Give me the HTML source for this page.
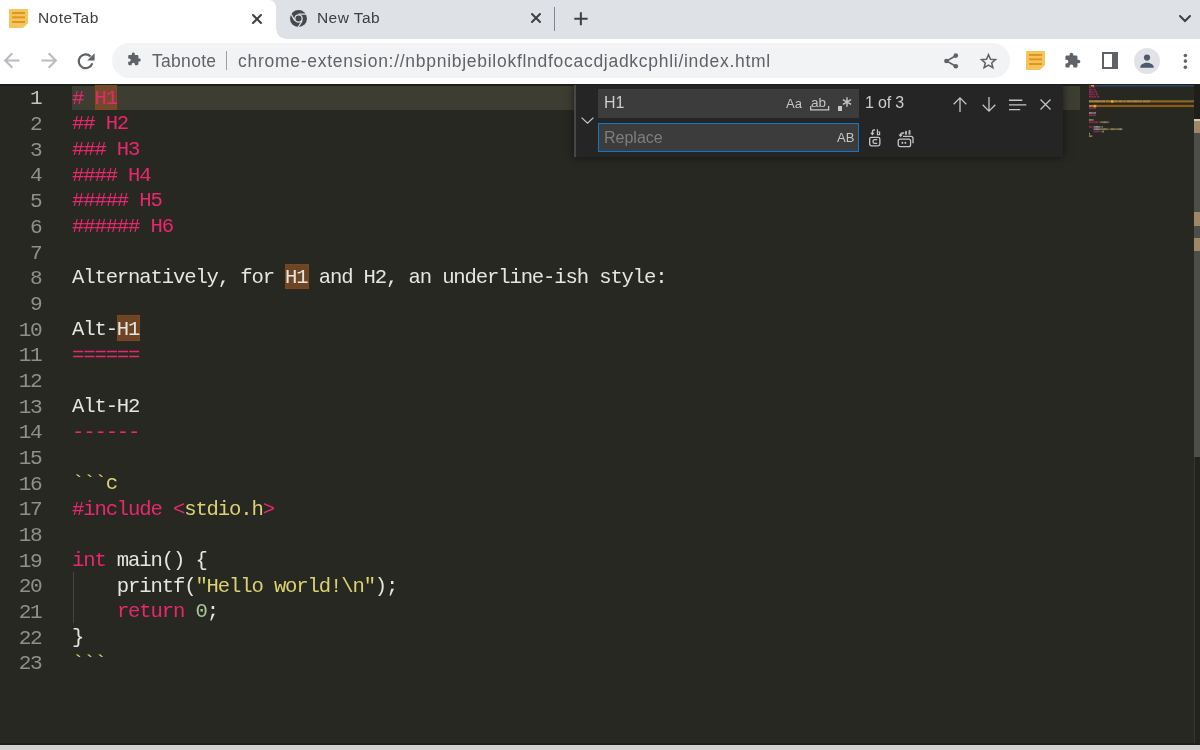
<!DOCTYPE html>
<html><head><meta charset="utf-8">
<style>
*{margin:0;padding:0;box-sizing:border-box}
html,body{width:1200px;height:750px;overflow:hidden;background:#272822;font-family:"Liberation Sans",sans-serif}
.a{position:absolute}
.ttl,.url,.fw,.ln,.cl{will-change:transform}
svg{position:absolute;overflow:visible}
#tabstrip{left:0;top:0;width:1200px;height:39px;background:#dee1e6}
#toolbar{left:0;top:39px;width:1200px;height:45px;background:#fff}
#tab1{left:0;top:0;width:276px;height:39px;background:#fff;border-top-right-radius:7px}
.flare{left:276px;top:30px;width:9px;height:9px;background:radial-gradient(circle at 100% 0,#dee1e6 8px,#fff 8.7px)}
.ttl{font-size:15.5px;letter-spacing:0.42px;color:#3c4043;white-space:nowrap;line-height:20px}
#omni{left:112px;top:43.2px;width:897.6px;height:35px;background:#f1f3f4;border-radius:17.4px}
.url{font-size:17.5px;letter-spacing:0.72px;color:#5f6368;white-space:nowrap;line-height:22px}
#editor{left:0;top:84px;width:1200px;height:659px;background:#272822}
.ln{position:absolute;left:0;margin-top:0.7px;width:41.3px;text-align:right;font-family:"Liberation Mono",monospace;font-size:21.1px;line-height:25.67px;letter-spacing:-1.44px;white-space:pre}
.cl{position:absolute;left:72.4px;font-family:"Liberation Mono",monospace;font-size:20.6px;line-height:25.67px;color:#e6e6e0;letter-spacing:-1.142px;white-space:pre}
.p{color:#e9276f}.y{color:#dcd271}.g{color:#a9c59c}
.fw{font-size:16px;line-height:20px;white-space:nowrap}
</style></head><body>
<div id="tabstrip" class="a"></div>
<div id="tab1" class="a"></div>
<div class="a flare"></div>
<div id="toolbar" class="a"></div>

<!-- favicon -->
<svg style="left:9px;top:9px" width="19" height="19" viewBox="0 0 19 19">
<path d="M0 0H19V14L14 19H0Z" fill="#f3c55c"/>
<rect x="3" y="3" width="13" height="2" fill="#e0961e"/>
<rect x="3" y="7.3" width="13" height="2" fill="#e0961e"/>
<rect x="3" y="12" width="13" height="2" fill="#e0961e"/>
</svg>
<div class="a ttl" style="left:38.4px;top:8px">NoteTab</div>
<svg style="left:252px;top:13.6px" width="10" height="10" viewBox="0 0 10 10"><path d="M1 1L9 9M9 1L1 9" stroke="#3c4043" stroke-width="2" stroke-linecap="round"/></svg>

<!-- tab 2 -->
<svg style="left:289.5px;top:10px" width="17" height="17" viewBox="0 0 17 17">
<circle cx="8.5" cy="8.5" r="8.5" fill="#45484c"/>
<circle cx="8.5" cy="8.5" r="4.3" fill="#dee1e6"/>
<circle cx="8.5" cy="8.5" r="3" fill="#45484c"/>
<path d="M8.5 4.2H17M4.8 10.6L0.6 3.3M12.2 10.6L8 17.5" stroke="#dee1e6" stroke-width="1.3"/>
</svg>
<div class="a ttl" style="left:317px;top:8px">New Tab</div>
<svg style="left:531.3px;top:13.3px" width="10" height="10" viewBox="0 0 10 10"><path d="M1 1L9 9M9 1L1 9" stroke="#3c4043" stroke-width="2" stroke-linecap="round"/></svg>
<div class="a" style="left:554px;top:7.3px;width:1px;height:23.4px;background:#80868b"></div>
<svg style="left:574px;top:12px" width="14" height="14" viewBox="0 0 14 14"><path d="M6.85 0.3V13.3M0.3 6.8H13.6" stroke="#3c4043" stroke-width="2"/></svg>
<svg style="left:1178.7px;top:15px" width="12" height="7" viewBox="0 0 12 7"><path d="M1 1L6 6L11 1" stroke="#3c4043" stroke-width="2" fill="none" stroke-linecap="round"/></svg>

<!-- toolbar -->
<svg style="left:3.7px;top:52.4px" width="16" height="17" viewBox="0 0 16 17"><path d="M1 8.5H15.5M8.3 1.3L1.2 8.5L8.3 15.7" stroke="#b9bcc0" stroke-width="2.1" fill="none"/></svg>
<svg style="left:40.8px;top:52.4px" width="16" height="17" viewBox="0 0 16 17"><path d="M15 8.5H0.5M7.7 1.3L14.8 8.5L7.7 15.7" stroke="#b9bcc0" stroke-width="2.1" fill="none"/></svg>
<svg style="left:78.4px;top:52.8px" width="17" height="16" viewBox="0 0 17 16"><path d="M14.3 10.2A6.9 6.9 0 1 1 12.6 3.4" stroke="#5f6368" stroke-width="2.2" fill="none"/><path d="M16.6 0.2V7.6H9.2Z" fill="#5f6368"/></svg>

<div id="omni" class="a"></div>
<svg style="left:127.2px;top:52.2px" width="14.4" height="14.4" viewBox="0 0 24 24"><path d="M20.5 11H19V7c0-1.1-.9-2-2-2h-4V3.5C13 2.12 11.88 1 10.5 1S8 2.12 8 3.5V5H4c-1.1 0-1.99.9-1.99 2v3.8H3.5c1.49 0 2.7 1.21 2.7 2.7s-1.21 2.7-2.7 2.7H2V20c0 1.1.9 2 2 2h3.8v-1.5c0-1.49 1.21-2.7 2.7-2.7 1.49 0 2.7 1.21 2.7 2.7V22H17c1.1 0 2-.9 2-2v-4h1.5c1.38 0 2.5-1.12 2.5-2.5S21.88 11 20.5 11z" fill="#5f6368"/></svg>
<div class="a url" style="left:151.7px;top:50px;letter-spacing:0.3px">Tabnote</div>
<div class="a" style="left:225.5px;top:51.3px;width:1.3px;height:18.4px;background:#9aa0a6"></div>
<div class="a url" style="left:238px;top:50px">chrome-extension://nbpnibjebilokflndfocacdjadkcphli/index.html</div>

<svg style="left:944px;top:53px" width="14" height="16" viewBox="0 0 14 16"><path d="M11.8 2.8L2.6 8L11.8 13.2" stroke="#5f6368" stroke-width="1.6" fill="none"/><circle cx="11.8" cy="2.6" r="2.3" fill="#5f6368"/><circle cx="2.4" cy="8" r="2.3" fill="#5f6368"/><circle cx="11.8" cy="13.3" r="2.3" fill="#5f6368"/></svg>
<svg style="left:979.8px;top:53px" width="17" height="16" viewBox="0 0 24 23"><path d="M12 2.5L14.9 9.1L22 9.6L16.6 14.3L18.3 21.2L12 17.5L5.7 21.2L7.4 14.3L2 9.6L9.1 9.1Z" stroke="#5f6368" stroke-width="2.2" fill="none" stroke-linejoin="miter"/></svg>

<svg style="left:1025.9px;top:50.8px" width="19" height="19" viewBox="0 0 19 19">
<path d="M0 0H19V14L14 19H0Z" fill="#f3c55c"/>
<rect x="3" y="3" width="13" height="2" fill="#e0961e"/>
<rect x="3" y="7.3" width="13" height="2" fill="#e0961e"/>
<rect x="3" y="12" width="13" height="2" fill="#e0961e"/>
</svg>
<svg style="left:1064px;top:52px" width="17" height="17" viewBox="0 0 24 24"><path d="M20.5 11H19V7c0-1.1-.9-2-2-2h-4V3.5C13 2.12 11.88 1 10.5 1S8 2.12 8 3.5V5H4c-1.1 0-1.99.9-1.99 2v3.8H3.5c1.49 0 2.7 1.21 2.7 2.7s-1.21 2.7-2.7 2.7H2V20c0 1.1.9 2 2 2h3.8v-1.5c0-1.490 1.21-2.7 2.7-2.7 1.49 0 2.7 1.21 2.7 2.7V22H17c1.1 0 2-.9 2-2v-4h1.5c1.38 0 2.5-1.12 2.5-2.5S21.88 11 20.5 11z" fill="#5f6368"/></svg>
<svg style="left:1101.9px;top:52px" width="16" height="17" viewBox="0 0 16 17"><rect x="1" y="1" width="14" height="15" stroke="#5f6368" stroke-width="2" fill="none"/><rect x="10" y="1" width="5" height="15" fill="#5f6368"/></svg>
<svg style="left:1134px;top:47.5px" width="26" height="26" viewBox="0 0 26 26"><circle cx="13" cy="13" r="13" fill="#e1e3e6"/><circle cx="13" cy="9.6" r="3.1" fill="#4e5b6f"/><path d="M6.2 19.8C6.2 16.2 10 14.8 13 14.8S19.8 16.2 19.8 19.8Z" fill="#4e5b6f"/></svg>
<svg style="left:1183px;top:53px" width="5" height="16" viewBox="0 0 5 16"><circle cx="2.4" cy="2.5" r="1.8" fill="#5f6368"/><circle cx="2.4" cy="8.1" r="1.8" fill="#5f6368"/><circle cx="2.4" cy="14.2" r="1.8" fill="#5f6368"/></svg>

<div id="editor" class="a"></div>
<!--EDITOR-->
<div class="a" style="left:72px;top:85.3px;width:1008px;height:24.4px;background:#3e3d32"></div>
<div class="a" style="left:0;top:84px;width:1200px;height:1.5px;background:#1e1f1b"></div>
<div class="a" style="left:94.84px;top:85.3px;width:22.44px;height:24.4px;background:#72492a;box-shadow:inset 0 0 0 1px #7b4a20"></div>
<div class="a" style="left:285.08px;top:263.69px;width:23.44px;height:25.67px;background:#6d4424;box-shadow:inset 0 0 0 1px #7b481c"></div>
<div class="a" style="left:116.78px;top:315.03px;width:23.44px;height:25.67px;background:#6d4424;box-shadow:inset 0 0 0 1px #7b481c"></div>
<div class="a" style="left:72.5px;top:571.73px;width:1px;height:51.34px;background:#464741"></div>
<div class="ln" style="top:85.80px;color:#c2c2bf">1</div>
<div class="cl" style="top:85.80px"><span class="p"># H1</span></div>
<div class="ln" style="top:111.47px;color:#90908a">2</div>
<div class="cl" style="top:111.47px"><span class="p">## H2</span></div>
<div class="ln" style="top:137.14px;color:#90908a">3</div>
<div class="cl" style="top:137.14px"><span class="p">### H3</span></div>
<div class="ln" style="top:162.81px;color:#90908a">4</div>
<div class="cl" style="top:162.81px"><span class="p">#### H4</span></div>
<div class="ln" style="top:188.48px;color:#90908a">5</div>
<div class="cl" style="top:188.48px"><span class="p">##### H5</span></div>
<div class="ln" style="top:214.15px;color:#90908a">6</div>
<div class="cl" style="top:214.15px"><span class="p">###### H6</span></div>
<div class="ln" style="top:239.82px;color:#90908a">7</div>
<div class="ln" style="top:265.49px;color:#90908a">8</div>
<div class="cl" style="top:265.49px">Alternatively, for H1 and H2, an underline-ish style:</div>
<div class="ln" style="top:291.16px;color:#90908a">9</div>
<div class="ln" style="top:316.83px;color:#90908a">10</div>
<div class="cl" style="top:316.83px">Alt-H1</div>
<div class="ln" style="top:342.50px;color:#90908a">11</div>
<div class="cl" style="top:342.50px"><span class="p">======</span></div>
<div class="ln" style="top:368.17px;color:#90908a">12</div>
<div class="ln" style="top:393.84px;color:#90908a">13</div>
<div class="cl" style="top:393.84px">Alt-H2</div>
<div class="ln" style="top:419.51px;color:#90908a">14</div>
<div class="cl" style="top:419.51px"><span class="p">------</span></div>
<div class="ln" style="top:445.18px;color:#90908a">15</div>
<div class="ln" style="top:470.85px;color:#90908a">16</div>
<div class="cl" style="top:470.85px"><span class="y">```c</span></div>
<div class="ln" style="top:496.52px;color:#90908a">17</div>
<div class="cl" style="top:496.52px"><span class="p">#include </span><span class="p">&lt;</span><span class="y">stdio.h</span><span class="p">&gt;</span></div>
<div class="ln" style="top:522.19px;color:#90908a">18</div>
<div class="ln" style="top:547.86px;color:#90908a">19</div>
<div class="cl" style="top:547.86px"><span class="p">int</span> main() {</div>
<div class="ln" style="top:573.53px;color:#90908a">20</div>
<div class="cl" style="top:573.53px">    printf(<span class="y">&quot;Hello world!\n&quot;</span>);</div>
<div class="ln" style="top:599.20px;color:#90908a">21</div>
<div class="cl" style="top:599.20px">    <span class="p">return</span> <span class="g">0</span>;</div>
<div class="ln" style="top:624.87px;color:#90908a">22</div>
<div class="cl" style="top:624.87px">}</div>
<div class="ln" style="top:650.54px;color:#90908a">23</div>
<div class="cl" style="top:650.54px"><span class="y">```</span></div>
<!--/EDITOR-->
<!--FIND-->
<div class="a" style="left:573.7px;top:84px;width:489.8px;height:72.6px;background:#252526;box-shadow:0 0 8px rgba(0,0,0,0.55);clip-path:inset(0 -12px -12px -12px)"></div>
<div class="a" style="left:573.7px;top:84px;width:2.4px;height:72.6px;background:#474747"></div>
<svg style="left:581.2px;top:117.2px" width="13" height="7" viewBox="0 0 13 7"><path d="M0.6 0.6L6.5 6.2L12.4 0.6" stroke="#c5c5c5" stroke-width="1.3" fill="none"/></svg>
<div class="a" style="left:598px;top:88.8px;width:261.2px;height:28.8px;background:#3c3c3c"></div>
<div class="a fw" style="left:604.2px;top:92.8px;color:#cccccc">H1</div>
<div class="a fw" style="left:786px;top:94.3px;font-size:13px;color:#c5c5c5">Aa</div>
<div class="a fw" style="left:811px;top:93px;font-size:13.5px;color:#c5c5c5">ab</div>
<svg style="left:809.5px;top:106px" width="20" height="5" viewBox="0 0 20 5"><path d="M0.7 0V3.9H18.6V0" stroke="#c5c5c5" stroke-width="1.3" fill="none"/></svg>
<div class="a" style="left:837.5px;top:106.3px;width:4.5px;height:4.5px;background:#c5c5c5"></div>
<svg style="left:842px;top:96.5px" width="10" height="10" viewBox="0 0 10 10"><path d="M5 0.3V9.7M0.9 2.6L9.1 7.4M0.9 7.4L9.1 2.6" stroke="#c5c5c5" stroke-width="1.4"/></svg>
<div class="a fw" style="left:864.5px;top:92.8px;color:#cccccc;letter-spacing:-0.2px">1 of 3</div>
<svg style="left:953px;top:96.5px" width="14" height="15" viewBox="0 0 14 15"><path d="M7 1V15M0.7 7.2L7 0.9L13.3 7.2" stroke="#c5c5c5" stroke-width="1.3" fill="none"/></svg>
<svg style="left:982.3px;top:96.5px" width="14" height="15" viewBox="0 0 14 15"><path d="M7 0V14M0.7 7.8L7 14.1L13.3 7.8" stroke="#c5c5c5" stroke-width="1.3" fill="none"/></svg>
<svg style="left:1008.8px;top:98.5px" width="18" height="12" viewBox="0 0 18 12"><path d="M0 1.2H13.3M0 5.9H17.3M0 10.6H11.2" stroke="#c5c5c5" stroke-width="1.4"/></svg>
<svg style="left:1040.2px;top:98.6px" width="11" height="11" viewBox="0 0 11 11"><path d="M0.5 0.5L10.5 10.5M10.5 0.5L0.5 10.5" stroke="#c5c5c5" stroke-width="1.3"/></svg>
<div class="a" style="left:598px;top:122.9px;width:261.2px;height:28.8px;background:#3c3c3c;border:1.6px solid #0e78cc"></div>
<div class="a fw" style="left:604.2px;top:128px;color:#7e7e7e">Replace</div>
<div class="a fw" style="left:837.3px;top:127.8px;font-size:13px;color:#c5c5c5">AB</div>
<svg style="left:869px;top:129px" width="12" height="18" viewBox="0 0 12 18"><rect x="0.65" y="8.3" width="10.2" height="8.5" rx="1.8" stroke="#c5c5c5" stroke-width="1.3" fill="none"/><path d="M8.2 10.6H5.6Q4 10.6 4 12.5Q4 14.4 5.6 14.4H8.2" stroke="#c5c5c5" stroke-width="1.3" fill="none"/><path d="M6 1H5Q3.4 1 3.4 2.8V4.6" stroke="#c5c5c5" stroke-width="1.3" fill="none"/><path d="M1.2 3.8L3.4 6.4L5.6 3.8Z" fill="#c5c5c5"/><path d="M8.4 0.3V5.6H10.6V3H8.4" stroke="#c5c5c5" stroke-width="1.2" fill="none"/></svg>
<svg style="left:896.5px;top:128.5px" width="17" height="19" viewBox="0 0 17 19"><rect x="1.25" y="10.15" width="12.35" height="7.5" rx="2" stroke="#c5c5c5" stroke-width="1.3" fill="none"/><path d="M6 7.3H14Q16 7.3 16 9.3V14.3" stroke="#c5c5c5" stroke-width="1.3" fill="none"/><rect x="4.6" y="12.8" width="1.6" height="2" fill="#c5c5c5"/><rect x="7.6" y="12.8" width="1.6" height="2" fill="#c5c5c5"/><path d="M7.2 4H5.6Q3.6 4 3.6 6V6.8" stroke="#c5c5c5" stroke-width="1.3" fill="none"/><path d="M1.4 5.6L3.6 8.2L5.8 5.6Z" fill="#c5c5c5"/><rect x="8" y="1.8" width="2" height="4" rx="0.9" fill="#b5b5b5"/><rect x="11.5" y="1" width="2" height="4.8" rx="0.9" fill="#b5b5b5"/></svg>
<!--/FIND-->
<!--RULER-->
<div class="a" style="left:1080px;top:84px;width:9px;height:659px;background:#272822"></div>
<div class="a" style="left:1194px;top:84px;width:6px;height:659px;background:#22231f;border-left:1px solid #34352f"></div>
<div class="a" style="left:1194px;top:84px;width:6px;height:35.4px;background:#1e1f1b"></div>
<div class="a" style="left:1194px;top:119.4px;width:6px;height:337.3px;background:#4d4d49"></div>
<div class="a" style="left:1194px;top:119.4px;width:6px;height:1.6px;background:#cfcac0"></div>
<div class="a" style="left:1194px;top:121px;width:6px;height:12.4px;background:#9e8867"></div>
<div class="a" style="left:1194px;top:211.8px;width:6px;height:14px;background:#9e8867"></div>
<div class="a" style="left:1194px;top:238.4px;width:6px;height:12.6px;background:#9e8867"></div>
<!--/RULER-->

<!--MINI-->
<svg style="left:1089.0px;top:84.2px" width="105.0" height="60" viewBox="0 0 105.0 60"><rect x="0" y="0.40" width="105.00" height="2.10" fill="#2a4766"/><rect x="0" y="16.24" width="105.00" height="2.20" fill="#8e6420"/><rect x="0" y="20.88" width="105.00" height="2.20" fill="#8a5b16"/><rect x="0.00" y="0.20" width="1.06" height="1.80" fill="#922a56"/><rect x="2.30" y="0.20" width="1.06" height="1.80" fill="#922a56"/><rect x="3.45" y="0.20" width="1.06" height="1.80" fill="#922a56"/><rect x="0.00" y="2.52" width="1.06" height="1.80" fill="#922a56"/><rect x="1.15" y="2.52" width="1.06" height="1.80" fill="#922a56"/><rect x="3.45" y="2.52" width="1.06" height="1.80" fill="#922a56"/><rect x="4.60" y="2.52" width="1.06" height="1.80" fill="#922a56"/><rect x="0.00" y="4.84" width="1.06" height="1.80" fill="#922a56"/><rect x="1.15" y="4.84" width="1.06" height="1.80" fill="#922a56"/><rect x="2.30" y="4.84" width="1.06" height="1.80" fill="#922a56"/><rect x="4.60" y="4.84" width="1.06" height="1.80" fill="#922a56"/><rect x="5.75" y="4.84" width="1.06" height="1.80" fill="#922a56"/><rect x="0.00" y="7.16" width="1.06" height="1.80" fill="#922a56"/><rect x="1.15" y="7.16" width="1.06" height="1.80" fill="#922a56"/><rect x="2.30" y="7.16" width="1.06" height="1.80" fill="#922a56"/><rect x="3.45" y="7.16" width="1.06" height="1.80" fill="#922a56"/><rect x="5.75" y="7.16" width="1.06" height="1.80" fill="#922a56"/><rect x="6.90" y="7.16" width="1.06" height="1.80" fill="#922a56"/><rect x="0.00" y="9.48" width="1.06" height="1.80" fill="#922a56"/><rect x="1.15" y="9.48" width="1.06" height="1.80" fill="#922a56"/><rect x="2.30" y="9.48" width="1.06" height="1.80" fill="#922a56"/><rect x="3.45" y="9.48" width="1.06" height="1.80" fill="#922a56"/><rect x="4.60" y="9.48" width="1.06" height="1.80" fill="#922a56"/><rect x="6.90" y="9.48" width="1.06" height="1.80" fill="#922a56"/><rect x="8.05" y="9.48" width="1.06" height="1.80" fill="#922a56"/><rect x="0.00" y="11.80" width="1.06" height="1.80" fill="#922a56"/><rect x="1.15" y="11.80" width="1.06" height="1.80" fill="#922a56"/><rect x="2.30" y="11.80" width="1.06" height="1.80" fill="#922a56"/><rect x="3.45" y="11.80" width="1.06" height="1.80" fill="#922a56"/><rect x="4.60" y="11.80" width="1.06" height="1.80" fill="#922a56"/><rect x="5.75" y="11.80" width="1.06" height="1.80" fill="#922a56"/><rect x="8.05" y="11.80" width="1.06" height="1.80" fill="#922a56"/><rect x="9.20" y="11.80" width="1.06" height="1.80" fill="#922a56"/><rect x="0.00" y="16.44" width="1.06" height="1.80" fill="#ad8a50"/><rect x="1.15" y="16.44" width="1.06" height="1.80" fill="#ad8a50"/><rect x="2.30" y="16.44" width="1.06" height="1.80" fill="#ad8a50"/><rect x="3.45" y="16.44" width="1.06" height="1.80" fill="#ad8a50"/><rect x="4.60" y="16.44" width="1.06" height="1.80" fill="#ad8a50"/><rect x="5.75" y="16.44" width="1.06" height="1.80" fill="#ad8a50"/><rect x="6.90" y="16.44" width="1.06" height="1.80" fill="#ad8a50"/><rect x="8.05" y="16.44" width="1.06" height="1.80" fill="#ad8a50"/><rect x="9.20" y="16.44" width="1.06" height="1.80" fill="#ad8a50"/><rect x="10.35" y="16.44" width="1.06" height="1.80" fill="#ad8a50"/><rect x="11.50" y="16.44" width="1.06" height="1.80" fill="#ad8a50"/><rect x="12.65" y="16.44" width="1.06" height="1.80" fill="#ad8a50"/><rect x="13.80" y="16.44" width="1.06" height="1.80" fill="#ad8a50"/><rect x="14.95" y="16.44" width="1.06" height="1.80" fill="#ad8a50"/><rect x="17.25" y="16.44" width="1.06" height="1.80" fill="#ad8a50"/><rect x="18.40" y="16.44" width="1.06" height="1.80" fill="#ad8a50"/><rect x="19.55" y="16.44" width="1.06" height="1.80" fill="#ad8a50"/><rect x="21.85" y="16.44" width="1.06" height="1.80" fill="#ad8a50"/><rect x="23.00" y="16.44" width="1.06" height="1.80" fill="#ad8a50"/><rect x="25.30" y="16.44" width="1.06" height="1.80" fill="#ad8a50"/><rect x="26.45" y="16.44" width="1.06" height="1.80" fill="#ad8a50"/><rect x="27.60" y="16.44" width="1.06" height="1.80" fill="#ad8a50"/><rect x="29.90" y="16.44" width="1.06" height="1.80" fill="#ad8a50"/><rect x="31.05" y="16.44" width="1.06" height="1.80" fill="#ad8a50"/><rect x="32.20" y="16.44" width="1.06" height="1.80" fill="#ad8a50"/><rect x="34.50" y="16.44" width="1.06" height="1.80" fill="#ad8a50"/><rect x="35.65" y="16.44" width="1.06" height="1.80" fill="#ad8a50"/><rect x="37.95" y="16.44" width="1.06" height="1.80" fill="#ad8a50"/><rect x="39.10" y="16.44" width="1.06" height="1.80" fill="#ad8a50"/><rect x="40.25" y="16.44" width="1.06" height="1.80" fill="#ad8a50"/><rect x="41.40" y="16.44" width="1.06" height="1.80" fill="#ad8a50"/><rect x="42.55" y="16.44" width="1.06" height="1.80" fill="#ad8a50"/><rect x="43.70" y="16.44" width="1.06" height="1.80" fill="#ad8a50"/><rect x="44.85" y="16.44" width="1.06" height="1.80" fill="#ad8a50"/><rect x="46.00" y="16.44" width="1.06" height="1.80" fill="#ad8a50"/><rect x="47.15" y="16.44" width="1.06" height="1.80" fill="#ad8a50"/><rect x="48.30" y="16.44" width="1.06" height="1.80" fill="#ad8a50"/><rect x="49.45" y="16.44" width="1.06" height="1.80" fill="#ad8a50"/><rect x="50.60" y="16.44" width="1.06" height="1.80" fill="#ad8a50"/><rect x="51.75" y="16.44" width="1.06" height="1.80" fill="#ad8a50"/><rect x="54.05" y="16.44" width="1.06" height="1.80" fill="#ad8a50"/><rect x="55.20" y="16.44" width="1.06" height="1.80" fill="#ad8a50"/><rect x="56.35" y="16.44" width="1.06" height="1.80" fill="#ad8a50"/><rect x="57.50" y="16.44" width="1.06" height="1.80" fill="#ad8a50"/><rect x="58.65" y="16.44" width="1.06" height="1.80" fill="#ad8a50"/><rect x="59.80" y="16.44" width="1.06" height="1.80" fill="#ad8a50"/><rect x="0.00" y="21.08" width="1.06" height="1.80" fill="#ad8a50"/><rect x="1.15" y="21.08" width="1.06" height="1.80" fill="#ad8a50"/><rect x="2.30" y="21.08" width="1.06" height="1.80" fill="#ad8a50"/><rect x="3.45" y="21.08" width="1.06" height="1.80" fill="#ad8a50"/><rect x="4.60" y="21.08" width="1.06" height="1.80" fill="#ad8a50"/><rect x="5.75" y="21.08" width="1.06" height="1.80" fill="#ad8a50"/><rect x="0.00" y="23.40" width="1.06" height="1.80" fill="#922a56"/><rect x="1.15" y="23.40" width="1.06" height="1.80" fill="#922a56"/><rect x="2.30" y="23.40" width="1.06" height="1.80" fill="#922a56"/><rect x="3.45" y="23.40" width="1.06" height="1.80" fill="#922a56"/><rect x="4.60" y="23.40" width="1.06" height="1.80" fill="#922a56"/><rect x="5.75" y="23.40" width="1.06" height="1.80" fill="#922a56"/><rect x="0.00" y="28.04" width="1.06" height="1.80" fill="#8e8e88"/><rect x="1.15" y="28.04" width="1.06" height="1.80" fill="#8e8e88"/><rect x="2.30" y="28.04" width="1.06" height="1.80" fill="#8e8e88"/><rect x="3.45" y="28.04" width="1.06" height="1.80" fill="#8e8e88"/><rect x="4.60" y="28.04" width="1.06" height="1.80" fill="#8e8e88"/><rect x="5.75" y="28.04" width="1.06" height="1.80" fill="#8e8e88"/><rect x="0.00" y="30.36" width="1.06" height="1.80" fill="#922a56"/><rect x="1.15" y="30.36" width="1.06" height="1.80" fill="#922a56"/><rect x="2.30" y="30.36" width="1.06" height="1.80" fill="#922a56"/><rect x="3.45" y="30.36" width="1.06" height="1.80" fill="#922a56"/><rect x="4.60" y="30.36" width="1.06" height="1.80" fill="#922a56"/><rect x="5.75" y="30.36" width="1.06" height="1.80" fill="#922a56"/><rect x="0.00" y="35.00" width="1.06" height="1.80" fill="#8a8555"/><rect x="1.15" y="35.00" width="1.06" height="1.80" fill="#8a8555"/><rect x="2.30" y="35.00" width="1.06" height="1.80" fill="#8a8555"/><rect x="3.45" y="35.00" width="1.06" height="1.80" fill="#8a8555"/><rect x="0.00" y="37.32" width="1.06" height="1.80" fill="#922a56"/><rect x="1.15" y="37.32" width="1.06" height="1.80" fill="#922a56"/><rect x="2.30" y="37.32" width="1.06" height="1.80" fill="#922a56"/><rect x="3.45" y="37.32" width="1.06" height="1.80" fill="#922a56"/><rect x="4.60" y="37.32" width="1.06" height="1.80" fill="#922a56"/><rect x="5.75" y="37.32" width="1.06" height="1.80" fill="#922a56"/><rect x="6.90" y="37.32" width="1.06" height="1.80" fill="#922a56"/><rect x="8.05" y="37.32" width="1.06" height="1.80" fill="#922a56"/><rect x="10.35" y="37.32" width="1.06" height="1.80" fill="#922a56"/><rect x="11.50" y="37.32" width="1.06" height="1.80" fill="#8a8555"/><rect x="12.65" y="37.32" width="1.06" height="1.80" fill="#8a8555"/><rect x="13.80" y="37.32" width="1.06" height="1.80" fill="#8a8555"/><rect x="14.95" y="37.32" width="1.06" height="1.80" fill="#8a8555"/><rect x="16.10" y="37.32" width="1.06" height="1.80" fill="#8a8555"/><rect x="17.25" y="37.32" width="1.06" height="1.80" fill="#8a8555"/><rect x="18.40" y="37.32" width="1.06" height="1.80" fill="#8a8555"/><rect x="19.55" y="37.32" width="1.06" height="1.80" fill="#922a56"/><rect x="0.00" y="41.96" width="1.06" height="1.80" fill="#922a56"/><rect x="1.15" y="41.96" width="1.06" height="1.80" fill="#922a56"/><rect x="2.30" y="41.96" width="1.06" height="1.80" fill="#922a56"/><rect x="4.60" y="41.96" width="1.06" height="1.80" fill="#8e8e88"/><rect x="5.75" y="41.96" width="1.06" height="1.80" fill="#8e8e88"/><rect x="6.90" y="41.96" width="1.06" height="1.80" fill="#8e8e88"/><rect x="8.05" y="41.96" width="1.06" height="1.80" fill="#8e8e88"/><rect x="9.20" y="41.96" width="1.06" height="1.80" fill="#8e8e88"/><rect x="10.35" y="41.96" width="1.06" height="1.80" fill="#8e8e88"/><rect x="12.65" y="41.96" width="1.06" height="1.80" fill="#8e8e88"/><rect x="4.60" y="44.28" width="1.06" height="1.80" fill="#8e8e88"/><rect x="5.75" y="44.28" width="1.06" height="1.80" fill="#8e8e88"/><rect x="6.90" y="44.28" width="1.06" height="1.80" fill="#8e8e88"/><rect x="8.05" y="44.28" width="1.06" height="1.80" fill="#8e8e88"/><rect x="9.20" y="44.28" width="1.06" height="1.80" fill="#8e8e88"/><rect x="10.35" y="44.28" width="1.06" height="1.80" fill="#8e8e88"/><rect x="11.50" y="44.28" width="1.06" height="1.80" fill="#8e8e88"/><rect x="12.65" y="44.28" width="1.06" height="1.80" fill="#8a8555"/><rect x="13.80" y="44.28" width="1.06" height="1.80" fill="#8a8555"/><rect x="14.95" y="44.28" width="1.06" height="1.80" fill="#8a8555"/><rect x="16.10" y="44.28" width="1.06" height="1.80" fill="#8a8555"/><rect x="17.25" y="44.28" width="1.06" height="1.80" fill="#8a8555"/><rect x="18.40" y="44.28" width="1.06" height="1.80" fill="#8a8555"/><rect x="20.70" y="44.28" width="1.06" height="1.80" fill="#8a8555"/><rect x="21.85" y="44.28" width="1.06" height="1.80" fill="#8a8555"/><rect x="23.00" y="44.28" width="1.06" height="1.80" fill="#8a8555"/><rect x="24.15" y="44.28" width="1.06" height="1.80" fill="#8a8555"/><rect x="25.30" y="44.28" width="1.06" height="1.80" fill="#8a8555"/><rect x="26.45" y="44.28" width="1.06" height="1.80" fill="#8a8555"/><rect x="27.60" y="44.28" width="1.06" height="1.80" fill="#8a8555"/><rect x="28.75" y="44.28" width="1.06" height="1.80" fill="#8a8555"/><rect x="29.90" y="44.28" width="1.06" height="1.80" fill="#8a8555"/><rect x="31.05" y="44.28" width="1.06" height="1.80" fill="#8e8e88"/><rect x="32.20" y="44.28" width="1.06" height="1.80" fill="#8e8e88"/><rect x="4.60" y="46.60" width="1.06" height="1.80" fill="#922a56"/><rect x="5.75" y="46.60" width="1.06" height="1.80" fill="#922a56"/><rect x="6.90" y="46.60" width="1.06" height="1.80" fill="#922a56"/><rect x="8.05" y="46.60" width="1.06" height="1.80" fill="#922a56"/><rect x="9.20" y="46.60" width="1.06" height="1.80" fill="#922a56"/><rect x="10.35" y="46.60" width="1.06" height="1.80" fill="#922a56"/><rect x="12.65" y="46.60" width="1.06" height="1.80" fill="#6e8a6a"/><rect x="13.80" y="46.60" width="1.06" height="1.80" fill="#8e8e88"/><rect x="0.00" y="48.92" width="1.06" height="1.80" fill="#8e8e88"/><rect x="0.00" y="51.24" width="1.06" height="1.80" fill="#8a8555"/><rect x="1.15" y="51.24" width="1.06" height="1.80" fill="#8a8555"/><rect x="2.30" y="51.24" width="1.06" height="1.80" fill="#8a8555"/><rect x="2.30" y="0.00" width="2.70" height="2.50" fill="#f0a020"/><rect x="21.85" y="16.24" width="2.70" height="2.50" fill="#f0a020"/><rect x="4.60" y="20.88" width="2.70" height="2.50" fill="#f0a020"/></svg>
<!--/MINI-->
<div class="a" style="left:0;top:84px;width:1200px;height:1.3px;background:#1d1e1a"></div>

<div class="a" style="left:0;top:743px;width:1200px;height:2px;background:#1f201c"></div>
<div class="a" style="left:0;top:745px;width:1200px;height:5px;background:#d2d2d2"></div>
</body></html>
